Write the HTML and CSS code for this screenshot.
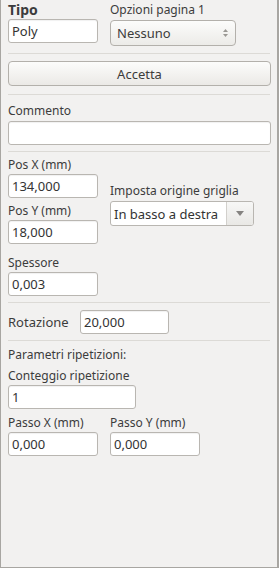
FILE: index.html
```html
<!DOCTYPE html>
<html>
<head>
  <title>Proprietà testo</title>
  <link rel="stylesheet" href="styles.css">
</head>
<body>

  <div class="panel">

    <!-- Tipo / opzioni pagina -->
    <div class="top-row">
      <div class="field">
        <div class="label bold">Tipo</div>
        <input class="entry" type="text" value="Poly">
      </div>
      <div class="field">
        <div class="label">Opzioni pagina 1</div>
        <div class="spin-combo">
          <span>Nessuno</span>
          <svg class="spin-arrows" width="7" height="10" viewBox="0 0 7 10">
            <path d="M1 4 L3.5 1 L6 4 Z" fill="#9a9894"/>
            <path d="M1 6 L3.5 9 L6 6 Z" fill="#9a9894"/>
          </svg>
        </div>
      </div>
    </div>

    <hr class="sep sep-1">

    <button class="accept-btn">Accetta</button>

    <hr class="sep sep-2">

    <div class="label comment-label">Commento</div>
    <input class="entry entry-wide" type="text" value="">

    <hr class="sep sep-3">

    <!-- posizione -->
    <div class="pos-grid">
      <div class="pos-left">
        <div class="label">Pos X (mm)</div>
        <input class="entry" type="text" value="134,000">
        <div class="label gap-label">Pos Y (mm)</div>
        <input class="entry" type="text" value="18,000">
        <div class="label thick-label">Spessore</div>
        <input class="entry entry-tight" type="text" value="0,003">
      </div>
      <div class="pos-right">
        <div class="label">Imposta origine griglia</div>
        <div class="combo">
          <span class="combo-text">In basso a destra</span>
          <span class="combo-btn">
            <svg width="8" height="5" viewBox="0 0 8 5"><path d="M0 0 H8 L4 5 Z" fill="#858380"/></svg>
          </span>
        </div>
      </div>
    </div>

    <hr class="sep sep-4">

    <div class="rot-row">
      <span class="label">Rotazione</span>
      <input class="entry entry-rot" type="text" value="20,000">
    </div>

    <hr class="sep sep-5">

    <!-- ripetizioni -->
    <div class="label repeat-title">Parametri ripetizioni:</div>
    <div class="label count-label">Conteggio ripetizione</div>
    <input class="entry entry-count entry-tight" type="text" value="1">

    <div class="step-row">
      <div class="field">
        <div class="label">Passo X (mm)</div>
        <input class="entry entry-tight" type="text" value="0,000">
      </div>
      <div class="field">
        <div class="label">Passo Y (mm)</div>
        <input class="entry entry-tight" type="text" value="0,000">
      </div>
    </div>

  </div>

</body>
</html>
```

FILE: styles.css
```css
body {
  margin: 0;
  background: #f2f1f0;
  font-family: "Noto Sans", "Open Sans", sans-serif;
  font-size: 12px;
  color: #3c3c3c;
  overflow: hidden;
}

.panel {
  box-sizing: border-box;
  width: 279px;
  height: 568px;
  padding: 2px 7px 0 7px;
  border: 1px solid #a8a6a2;
  border-top: none;
  border-right-width: 2px;
  background: #f2f1f0;
}

.label {
  line-height: 16px;
  height: 16px;
  white-space: nowrap;
}

.bold {
  font-weight: bold;
  font-size: 14px;
}

.field {
  display: flex;
  flex-direction: column;
}

.entry {
  box-sizing: border-box;
  display: block;
  width: 90px;
  height: 24px;
  margin: 1px 0 0 0;
  padding: 0 3px;
  border: 1px solid #b9b6b1;
  border-radius: 3px;
  background: #fff;
  box-shadow: inset 0 1px 1px rgba(0, 0, 0, 0.06);
  font-family: inherit;
  font-size: 13px;
  color: #333;
  outline: none;
}

.entry-wide {
  width: 263px;
  margin-top: 2px;
}

.entry-tight {
  margin-top: 1px;
}

.entry-count {
  width: 128px;
}

.entry-rot {
  width: 89px;
  margin: 0;
}

.top-row {
  display: grid;
  grid-template-columns: 90px 126px;
  column-gap: 12px;
}

.spin-combo {
  box-sizing: border-box;
  height: 26px;
  margin-top: 2px;
  padding: 0 6px 0 6px;
  display: flex;
  align-items: center;
  justify-content: space-between;
  border: 1px solid #b3b0ab;
  border-radius: 4px;
  background: linear-gradient(#fcfcfb, #ecebe8);
  font-size: 13px;
}

.sep {
  border: none;
  height: 1px;
  margin: 0;
  background: #dcdad6;
}

.sep-1 { margin-top: 7px; }
.sep-2 { margin-top: 8px; }
.sep-3 { margin-top: 6px; }
.sep-4 { margin-top: 6px; }
.sep-5 { margin-top: 6px; }

.accept-btn {
  display: block;
  box-sizing: border-box;
  width: 263px;
  height: 25px;
  margin-top: 7px;
  border: 1px solid #b3b0ab;
  border-radius: 4px;
  background: linear-gradient(#fcfcfb, #ebe9e6);
  font-family: inherit;
  font-size: 13px;
  color: #3c3c3c;
  padding: 0;
}

.comment-label {
  margin-top: 8px;
}

.pos-grid {
  display: grid;
  grid-template-columns: 90px 144px;
  column-gap: 12px;
  padding-top: 5px;
}

.gap-label {
  margin-top: 5px;
}

.thick-label {
  margin-top: 11px;
}

.pos-right {
  margin-top: 26px;
}

.combo {
  box-sizing: border-box;
  display: flex;
  height: 25px;
  margin-top: 2px;
  border: 1px solid #b9b6b1;
  border-radius: 3px;
  background: #fff;
  overflow: hidden;
}

.combo-text {
  flex: 1;
  display: flex;
  align-items: center;
  padding-left: 3px;
  font-size: 13px;
  color: #333;
}

.combo-btn {
  width: 26px;
  display: flex;
  align-items: center;
  justify-content: center;
  border-left: 1px solid #d2d0cc;
  background: linear-gradient(#f7f7f6, #e9e8e5);
}

.rot-row {
  display: flex;
  align-items: center;
  gap: 8px;
  margin-top: 7px;
}

.rot-row .label {
  width: 64px;
  font-size: 13px;
}

.repeat-title {
  margin-top: 6px;
}

.count-label {
  margin-top: 5px;
}

.step-row {
  display: grid;
  grid-template-columns: 90px 90px;
  column-gap: 12px;
  margin-top: 6px;
}
```
